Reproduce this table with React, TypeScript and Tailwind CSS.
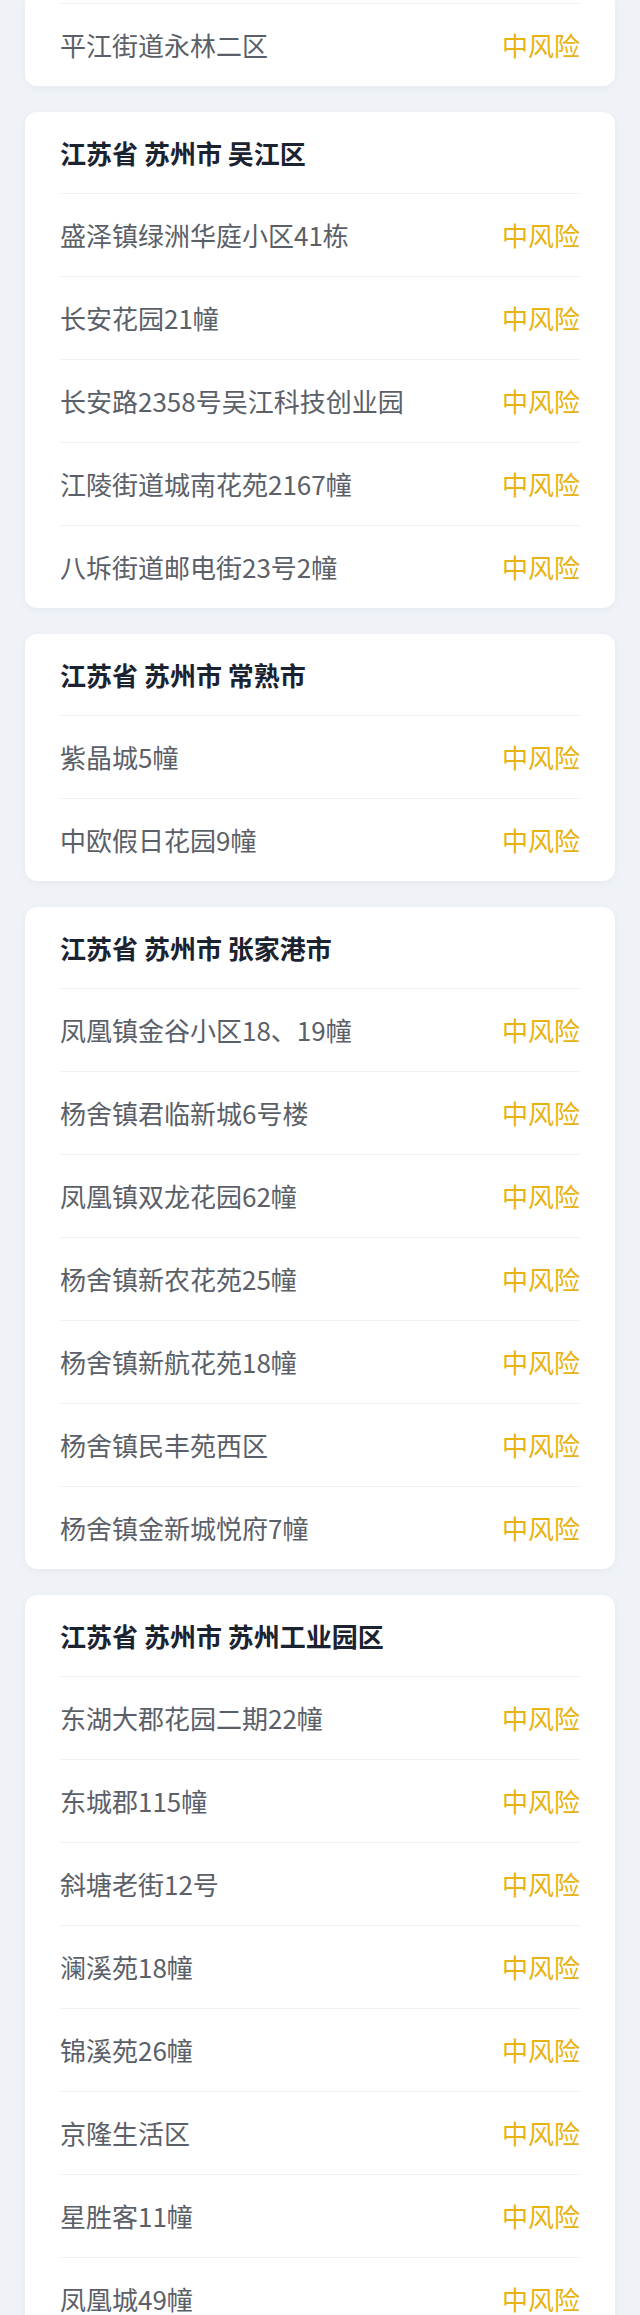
import React from "react";

type Group = { title?: string; rows: string[]; partial?: boolean };

const groups: Group[] = [
  { partial: true, rows: ["平江街道永林二区"] },
  {
    title: "江苏省 苏州市 吴江区",
    rows: ["盛泽镇绿洲华庭小区41栋", "长安花园21幢", "长安路2358号吴江科技创业园", "江陵街道城南花苑2167幢", "八坼街道邮电街23号2幢"],
  },
  { title: "江苏省 苏州市 常熟市", rows: ["紫晶城5幢", "中欧假日花园9幢"] },
  {
    title: "江苏省 苏州市 张家港市",
    rows: ["凤凰镇金谷小区18、19幢", "杨舍镇君临新城6号楼", "凤凰镇双龙花园62幢", "杨舍镇新农花苑25幢", "杨舍镇新航花苑18幢", "杨舍镇民丰苑西区", "杨舍镇金新城悦府7幢"],
  },
  {
    title: "江苏省 苏州市 苏州工业园区",
    rows: ["东湖大郡花园二期22幢", "东城郡115幢", "斜塘老街12号", "澜溪苑18幢", "锦溪苑26幢", "京隆生活区", "星胜客11幢", "凤凰城49幢"],
  },
];

function Row({ name }: { name: string }) {
  return (
    <div className="flex h-[83px] items-center justify-between border-t border-[#eef0f3]">
      <span className="text-[26px] leading-none text-[#5b6068]">{name}</span>
      <span className="text-[26px] leading-none text-[#e8b312]">中风险</span>
    </div>
  );
}

export default function App() {
  return (
    <div
      className="h-[2315px] overflow-hidden bg-[#eff3f8] px-[25px]"
      style={{ fontFamily: '"Noto Sans CJK SC", "Noto Sans", sans-serif' }}
    >
      <div className="flex flex-col gap-[26px]">
        {groups.map((g, i) => (
          <div
            key={i}
            className={
              g.partial
                ? "rounded-b-[12px] bg-white px-[35px] pt-[3px] shadow-[0_2px_6px_rgba(30,50,90,0.05)]"
                : "rounded-[12px] bg-white px-[35px] shadow-[0_2px_6px_rgba(30,50,90,0.05)]"
            }
          >
            {g.title && (
              <div className="flex h-[81px] items-center">
                <span className="text-[26px] font-bold leading-none text-[#1b2230]">{g.title}</span>
              </div>
            )}
            {g.rows.map((r) => (
              <Row key={r} name={r} />
            ))}
          </div>
        ))}
      </div>
    </div>
  );
}
